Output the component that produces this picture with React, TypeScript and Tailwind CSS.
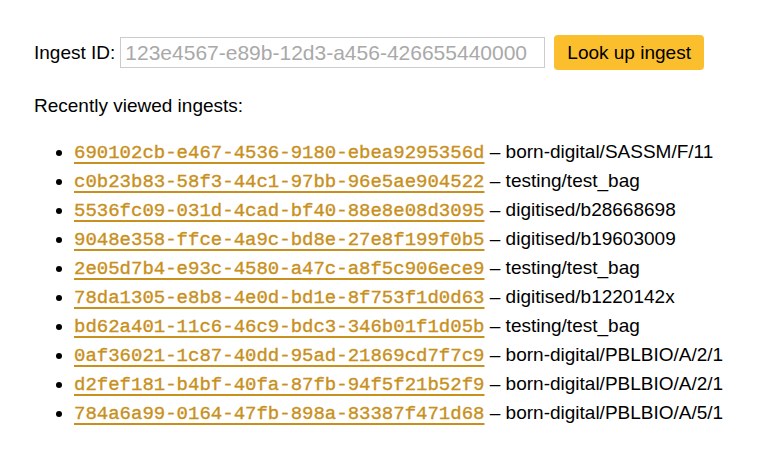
import React from "react";

const items: [string, string][] = [
  ["690102cb-e467-4536-9180-ebea9295356d", "born-digital/SASSM/F/11"],
  ["c0b23b83-58f3-44c1-97bb-96e5ae904522", "testing/test_bag"],
  ["5536fc09-031d-4cad-bf40-88e8e08d3095", "digitised/b28668698"],
  ["9048e358-ffce-4a9c-bd8e-27e8f199f0b5", "digitised/b19603009"],
  ["2e05d7b4-e93c-4580-a47c-a8f5c906ece9", "testing/test_bag"],
  ["78da1305-e8b8-4e0d-bd1e-8f753f1d0d63", "digitised/b1220142x"],
  ["bd62a401-11c6-46c9-bdc3-346b01f1d05b", "testing/test_bag"],
  ["0af36021-1c87-40dd-95ad-21869cd7f7c9", "born-digital/PBLBIO/A/2/1"],
  ["d2fef181-b4bf-40fa-87fb-94f5f21b52f9", "born-digital/PBLBIO/A/2/1"],
  ["784a6a99-0164-47fb-898a-83387f471d68", "born-digital/PBLBIO/A/5/1"],
];

export default function App() {
  return (
    <div className="min-h-[459px] bg-white px-[34px] pt-[35px] text-[19px] leading-[29px] text-black [font-family:'Liberation_Sans',Arial,sans-serif]">
      <div className="flex items-center">
        <span>Ingest ID:</span>
        <input
          className="ml-[5px] h-[31px] w-[425px] border border-[#cccccc] px-[4px] text-[21px] text-black outline-none placeholder:text-[#a9a9a9] [font-family:'Liberation_Sans',Arial,sans-serif]"
          placeholder="123e4567-e89b-12d3-a456-426655440000"
        />
        <button className="ml-[9px] h-[35px] rounded-[4px] bg-[#fbbf2d] px-[13px] text-[19px] text-black">
          Look up ingest
        </button>
      </div>
      <p className="mt-[21px]">Recently viewed ingests:</p>
      <ul className="mt-[17px] list-disc pl-[40px]">
        {items.map(([id, name]) => (
          <li key={id} className="h-[29px]">
            <a
              href="#"
              className="text-[19px] text-[#c8901c] underline decoration-[1.5px] underline-offset-[4px] [-webkit-text-stroke:0.35px_#c8901c] [font-family:'Liberation_Mono','Courier_New',monospace]"
            >
              {id}
            </a>{" "}
            – {name}
          </li>
        ))}
      </ul>
    </div>
  );
}
